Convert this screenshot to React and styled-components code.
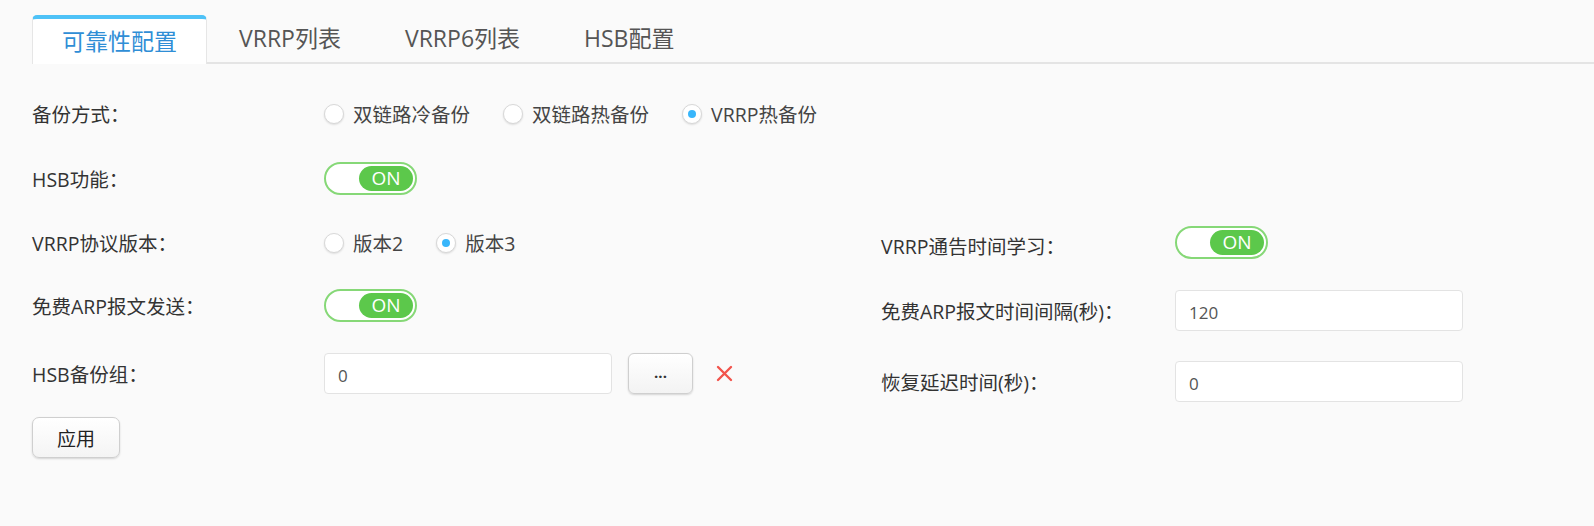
import React, { useState } from "react";
import styled, { createGlobalStyle } from "styled-components";

const FONT = `"Open Sans", "Noto Sans CJK SC", sans-serif`;

const Global = createGlobalStyle`
  html, body { margin: 0; padding: 0; background: #fafafa; }
  body { font-family: ${FONT}; color: #333; }
  * { box-sizing: border-box; }
`;

const Page = styled.div`
  width: 1594px;
  height: 526px;
  background: #fafafa;
  padding-top: 15px;
  overflow: hidden;
`;

const TabBar = styled.div`
  display: flex;
  align-items: flex-end;
  padding-left: 32px;
  height: 49px;
  position: relative;
  &::after {
    content: "";
    position: absolute;
    left: 32px;
    right: 0;
    bottom: 0;
    height: 2px;
    background: #e4e4e4;
  }
`;

const Tab = styled.div`
  position: relative;
  z-index: 1;
  height: ${(p) => (p.$active ? "49px" : "47px")};
  padding: 0 ${(p) => (p.$active ? 29 : 32)}px;
  display: flex;
  align-items: center;
  font-size: 23px;
  line-height: 1;
  color: ${(p) => (p.$active ? "#2f8ed6" : "#555")};
  background: ${(p) => (p.$active ? "#fff" : "transparent")};
  border: ${(p) => (p.$active ? "1px solid #e6e6e6" : "none")};
  border-bottom: none;
  border-top: ${(p) => (p.$active ? "4px solid #4ec2f7" : "none")};
  border-radius: ${(p) => (p.$active ? "5px 5px 0 0" : "0")};
  margin-bottom: ${(p) => (p.$active ? "0" : "2px")};
  cursor: pointer;
`;

const Form = styled.div`
  padding: 33px 0 0 32px;
`;

const Row = styled.div`
  display: flex;
  align-items: center;
  height: ${(p) => p.$h || 33}px;
  margin-bottom: ${(p) => (p.$mb === undefined ? 32 : p.$mb)}px;
`;

const Label = styled.div`
  width: ${(p) => p.$w || 292}px;
  flex: none;
  font-size: 19.5px;
  color: #333;
  white-space: nowrap;
  padding-top: ${(p) => p.$pt || 0}px;
`;

const Columns = styled.div`
  display: grid;
  grid-template-columns: 849px 1fr;
`;

const Column = styled.div`
  display: flex;
  flex-direction: column;
`;

const RadioGroup = styled.div`
  display: flex;
  align-items: center;
  gap: 33px;
`;

const RadioItem = styled.label`
  display: flex;
  align-items: center;
  gap: 9px;
  font-size: 19.5px;
  color: #444;
  cursor: pointer;
`;

const RadioCircle = styled.span`
  width: 20px;
  height: 20px;
  border-radius: 50%;
  background: #fff;
  border: 1px solid #d8d8d8;
  box-shadow: 0 1px 2px rgba(0, 0, 0, 0.12);
  display: flex;
  align-items: center;
  justify-content: center;
  &::after {
    content: "";
    width: 8px;
    height: 8px;
    border-radius: 50%;
    background: ${(p) => (p.$checked ? "#38b6fb" : "transparent")};
  }
`;

const Toggle = styled.div`
  width: 93px;
  height: 33px;
  border-radius: 17px;
  border: 2px solid #86d877;
  background: #fff;
  padding: 2px;
  display: flex;
  justify-content: flex-end;
  cursor: pointer;
`;

const ToggleKnob = styled.div`
  width: 54px;
  height: 25px;
  border-radius: 13px;
  background: #5cc84b;
  color: #fff;
  font-size: 19px;
  display: flex;
  align-items: center;
  justify-content: center;
  line-height: 1;
`;

const TextInput = styled.input`
  width: ${(p) => p.$w || 288}px;
  height: 41px;
  border: 1px solid #e3e3e3;
  border-radius: 4px;
  background: #fff;
  padding: 4px 13px 0;
  font-family: ${FONT};
  font-size: 17px;
  color: #555;
  outline: none;
`;

const Inline = styled.div`
  display: flex;
  align-items: center;
`;

const DotsButton = styled.button`
  margin-left: 16px;
  width: 65px;
  height: 41px;
  border: 1px solid #cfcfcf;
  border-radius: 6px;
  background: linear-gradient(#ffffff, #f3f3f3);
  box-shadow: 0 1px 2px rgba(0, 0, 0, 0.15);
  font-family: ${FONT};
  font-size: 15px;
  font-weight: bold;
  color: #333;
  padding: 0 0 4px;
  cursor: pointer;
`;

const RemoveIcon = styled.span`
  margin-left: 22px;
  width: 18px;
  height: 18px;
  display: flex;
  align-items: center;
  justify-content: center;
  cursor: pointer;
`;

const ApplyButton = styled.button`
  width: 88px;
  height: 41px;
  border: 1px solid #cfcfcf;
  border-radius: 7px;
  background: linear-gradient(#ffffff, #f4f4f4);
  box-shadow: 0 1px 2px rgba(0, 0, 0, 0.15);
  font-family: ${FONT};
  font-size: 19px;
  color: #222;
  cursor: pointer;
`;

const Switch = () => (
  <Toggle>
    <ToggleKnob>ON</ToggleKnob>
  </Toggle>
);

const Radio = ({ label, checked, onClick }) => (
  <RadioItem onClick={onClick}>
    <RadioCircle $checked={checked} />
    {label}
  </RadioItem>
);

export default function App() {
  const [mode, setMode] = useState(2);
  const [ver, setVer] = useState(1);
  const tabs = ["可靠性配置", "VRRP列表", "VRRP6列表", "HSB配置"];
  const [tab, setTab] = useState(0);

  return (
    <Page>
      <Global />
      <TabBar>
        {tabs.map((t, i) => (
          <Tab key={t} $active={tab === i} onClick={() => setTab(i)}>
            {t}
          </Tab>
        ))}
      </TabBar>
      <Form>
        <Row>
          <Label>备份方式：</Label>
          <RadioGroup>
            {["双链路冷备份", "双链路热备份", "VRRP热备份"].map((l, i) => (
              <Radio key={l} label={l} checked={mode === i} onClick={() => setMode(i)} />
            ))}
          </RadioGroup>
        </Row>
        <Row $mb={31}>
          <Label>HSB功能：</Label>
          <Switch />
        </Row>
        <Columns>
          <Column>
            <Row $mb={30}>
              <Label>VRRP协议版本：</Label>
              <RadioGroup>
                {["版本2", "版本3"].map((l, i) => (
                  <Radio key={l} label={l} checked={ver === i} onClick={() => setVer(i)} />
                ))}
              </RadioGroup>
            </Row>
            <Row $mb={31}>
              <Label>免费ARP报文发送：</Label>
              <Switch />
            </Row>
            <Row $h={41} $mb={23}>
              <Label>HSB备份组：</Label>
              <Inline>
                <TextInput defaultValue="0" />
                <DotsButton>...</DotsButton>
                <RemoveIcon>
                  <svg width="17" height="17" viewBox="0 0 17 17">
                    <path d="M2 2L15 15M15 2L2 15" stroke="#f2544c" strokeWidth="2.4" strokeLinecap="round" />
                  </svg>
                </RemoveIcon>
              </Inline>
            </Row>
            <Row $h={41} $mb={0}>
              <ApplyButton>应用</ApplyButton>
            </Row>
          </Column>
          <Column>
            <Row $mb={31}>
              <Label $w={294} $pt={6}>VRRP通告时间学习：</Label>
              <Switch />
            </Row>
            <Row $h={41} $mb={30}>
              <Label $w={294}>免费ARP报文时间间隔(秒)：</Label>
              <TextInput defaultValue="120" />
            </Row>
            <Row $h={41} $mb={0}>
              <Label $w={294}>恢复延迟时间(秒)：</Label>
              <TextInput defaultValue="0" />
            </Row>
          </Column>
        </Columns>
      </Form>
    </Page>
  );
}
